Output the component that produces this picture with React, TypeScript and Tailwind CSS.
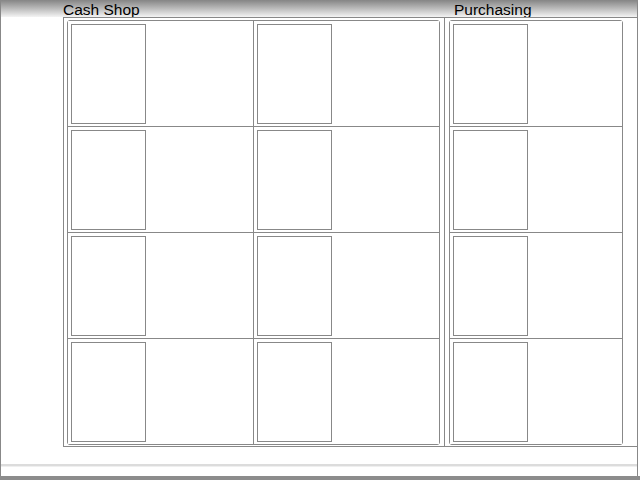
const cells = [0, 1, 2, 3, 4, 5, 6, 7];
const rows = [0, 1, 2, 3];

const Slot = () => (
  <div className="p-[3px] h-[105px]">
    <div className="w-[75px] h-[100px] border border-[#888]" />
  </div>
);

export default function App() {
  return (
    <div className="w-[640px] h-[480px] bg-white overflow-hidden font-['Liberation_Sans',Arial,sans-serif] text-black">
      {/* window frame */}
      <div className="w-[638px] h-[476px] border-l border-r border-[#888] flex flex-col">
        {/* header strip with titles */}
        <div className="h-[17px] shrink-0 flex bg-gradient-to-b from-[#858585] to-[#f4f4f4] pl-[62px]">
          <span className="w-[391px] text-[15.5px] leading-[16px] mt-[2px] whitespace-nowrap">Cash Shop</span>
          <span className="text-[15.5px] leading-[16px] mt-[2px] whitespace-nowrap">Purchasing</span>
        </div>

        {/* shop body */}
        <div className="ml-[62px] h-[430px] border-l border-t border-b border-[#888] flex items-start pl-[3px]">
          {/* item grid */}
          <div className="mt-[2px] w-[373px] border border-[#888] rounded-[3px] grid grid-cols-[185px_185px] gap-px bg-[#888]">
            {cells.map((c) => (
              <div key={c} className="bg-white">
                <Slot />
              </div>
            ))}
          </div>

          <div className="ml-[4px] w-px self-stretch bg-[#888]" />

          {/* purchase list */}
          <div className="ml-[4px] mt-[2px] w-[174px] border border-[#888] rounded-[3px] flex flex-col gap-px bg-[#888]">
            {rows.map((r) => (
              <div key={r} className="bg-white">
                <Slot />
              </div>
            ))}
          </div>
        </div>

        <div className="mt-[17px] h-[2px] bg-[#dcdcdc]" />
        <div className="h-px bg-[#efefef]" />
      </div>
      <div className="h-[4px] bg-[#8c8c8c]" />
    </div>
  );
}
